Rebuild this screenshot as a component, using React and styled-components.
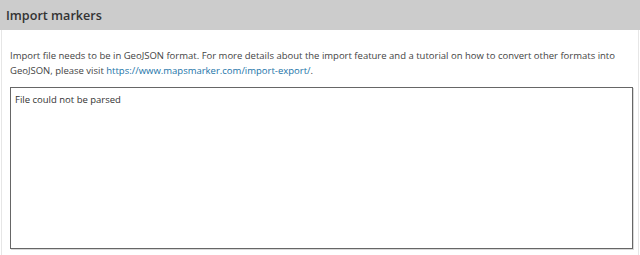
import React from "react";
import styled, { createGlobalStyle } from "styled-components";

const Global = createGlobalStyle`
  html, body {
    margin: 0;
    padding: 0;
    background: #fff;
  }
  body {
    font-family: "Open Sans", "Noto Sans", sans-serif;
  }
`;

const Panel = styled.div`
  width: 640px;
  height: 255px;
  display: flex;
  flex-direction: column;
  box-sizing: border-box;
  overflow: hidden;
`;

const Header = styled.div`
  height: 30px;
  background: #cccccc;
  display: flex;
  align-items: center;
  padding: 0 6px;
  box-sizing: border-box;
`;

const Title = styled.h2`
  margin: 0;
  font-size: 12.6px;
  font-weight: 600;
  color: #333;
`;

const Body = styled.div`
  flex: 1;
  border-left: 1px solid #e6e6e6;
  border-right: 1px solid #e6e6e6;
  margin: 0 1px;
  padding: 18px 7px 0 8px;
  display: flex;
  flex-direction: column;
  gap: 9px;
`;

const Intro = styled.p`
  margin: 0;
  font-size: 9.5px;
  line-height: 15px;
  color: #444;
  white-space: nowrap;
`;

const Link = styled.a`
  color: #1a73a8;
  text-decoration: none;
`;

const Output = styled.textarea`
  width: 623px;
  height: 162px;
  box-sizing: border-box;
  border: 1px solid #666;
  box-shadow: 1px 1px 0 #d8d8d8;
  padding: 4px 4px;
  resize: none;
  font-family: "Open Sans", "Noto Sans", sans-serif;
  font-size: 9.5px;
  line-height: 15px;
  color: #333;
  outline: none;
`;

export default function App() {
  return (
    <>
      <Global />
      <Panel>
        <Header>
          <Title>Import markers</Title>
        </Header>
        <Body>
          <Intro>
            Import file needs to be in GeoJSON format. For more details about the
            import feature and a tutorial on how to convert other formats into
            <br />
            GeoJSON, please visit{" "}
            <Link href="https://www.mapsmarker.com/import-export/">
              https://www.mapsmarker.com/import-export/
            </Link>
            .
          </Intro>
          <Output readOnly defaultValue="File could not be parsed" />
        </Body>
      </Panel>
    </>
  );
}
